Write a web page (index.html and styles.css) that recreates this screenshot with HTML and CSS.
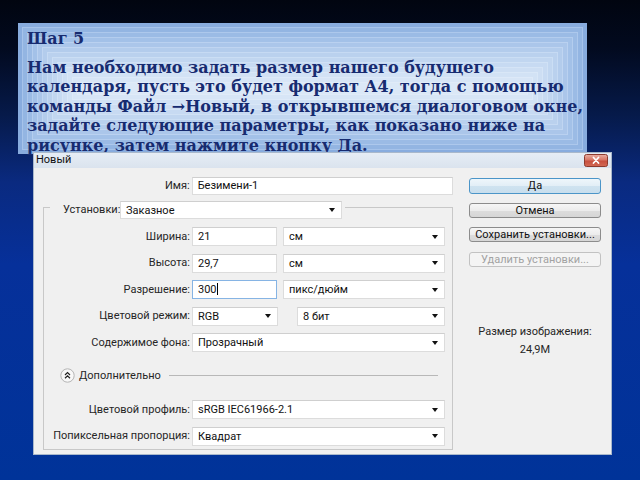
FILE: index.html
```html
<!DOCTYPE html>
<html lang="ru">
<head>
<meta charset="utf-8">
<title>Шаг 5</title>
<link rel="stylesheet" href="styles.css">
</head>
<body>
<div class="slide">
  <div class="note">
    <p class="note-title">Шаг 5</p>
    <p class="note-text">Нам необходимо задать размер нашего будущего<br>календаря, пусть это будет формат А4, тогда с помощью<br>команды Файл →Новый, в открывшемся диалоговом окне,<br>задайте следующие параметры, как показано ниже на<br>рисунке, затем нажмите кнопку Да.</p>
  </div>
  <div class="dialog">
    <div class="titlebar">
      <span class="title">Новый</span>
      <svg class="close" width="24" height="13" viewBox="0 0 24 13">
        <defs>
          <linearGradient id="cg" x1="0" y1="0" x2="0" y2="1">
            <stop offset="0" stop-color="#eab0a4"/>
            <stop offset="0.45" stop-color="#d77767"/>
            <stop offset="0.55" stop-color="#c8503f"/>
            <stop offset="1" stop-color="#d26a55"/>
          </linearGradient>
        </defs>
        <rect x="0.5" y="0.5" width="23" height="12" rx="2" fill="url(#cg)" stroke="#8c3a2e"/>
        <path d="M9.5 3.5 L14.5 9 M14.5 3.5 L9.5 9" stroke="#ffffff" stroke-width="1.8" stroke-linecap="round"/>
      </svg>
    </div>
    <div class="dlg-body">
      <div class="form">
        <div class="name-row">
          <span class="lbl lbl-name">Имя:</span>
          <div class="field w-name">Безимени-1</div>
        </div>
        <div class="group">
          <div class="group-head">
            <span class="lbl lbl-preset">Установки:</span>
            <div class="select w-preset"><span>Заказное</span><i class="arr"></i></div>
          </div>
          <div class="grow first">
            <span class="lbl glbl">Ширина:</span>
            <div class="field w-num">21</div>
            <div class="select w-unit"><span>см</span><i class="arr"></i></div>
          </div>
          <div class="grow">
            <span class="lbl glbl">Высота:</span>
            <div class="field w-num">29,7</div>
            <div class="select w-unit"><span>см</span><i class="arr"></i></div>
          </div>
          <div class="grow">
            <span class="lbl glbl">Разрешение:</span>
            <div class="field w-num focus">300<span class="caret"></span></div>
            <div class="select w-unit"><span>пикс/дюйм</span><i class="arr"></i></div>
          </div>
          <div class="grow">
            <span class="lbl glbl">Цветовой режим:</span>
            <div class="select w-mode"><span>RGB</span><i class="arr"></i></div>
            <div class="select w-bits"><span>8 бит</span><i class="arr"></i></div>
          </div>
          <div class="grow">
            <span class="lbl glbl">Содержимое фона:</span>
            <div class="select w-full"><span>Прозрачный</span><i class="arr"></i></div>
          </div>
          <div class="adv-row">
            <svg class="adv-btn" width="15" height="15" viewBox="0 0 15 15">
              <circle cx="7.5" cy="7.5" r="6.7" fill="#f8f8f8" stroke="#b4b4b4"/>
              <path d="M5 7 L7.5 4.6 L10 7 M5 10.2 L7.5 7.8 L10 10.2" fill="none" stroke="#222" stroke-width="1.2"/>
            </svg>
            <span class="adv-text">Дополнительно</span>
            <span class="adv-line"></span>
          </div>
          <div class="grow adv-first">
            <span class="lbl glbl">Цветовой профиль:</span>
            <div class="select w-full"><span>sRGB IEC61966-2.1</span><i class="arr"></i></div>
          </div>
          <div class="grow">
            <span class="lbl glbl">Попиксельная пропорция:</span>
            <div class="select w-full"><span>Квадрат</span><i class="arr"></i></div>
          </div>
        </div>
      </div>
      <div class="side">
        <div class="btn btn-default">Да</div>
        <div class="btn">Отмена</div>
        <div class="btn">Сохранить установки...</div>
        <div class="btn btn-disabled">Удалить установки...</div>
        <div class="size-label">Размер изображения:</div>
        <div class="size-value">24,9M</div>
      </div>
    </div>
  </div>
</div>
</body>
</html>
```

FILE: styles.css
```css
* { box-sizing: border-box; }

html, body {
  margin: 0;
  padding: 0;
}

body {
  width: 640px;
  height: 480px;
  overflow: hidden;
  background: linear-gradient(180deg, #010510 0%, #020a1f 10%, #061a4a 24%, #0a2a80 38%, #06309a 55%, #003399 100%);
  font-family: Roboto, "Liberation Sans", sans-serif;
}

.slide {
  padding: 23px 0 0 18px;
}

/* ---------- Text note ---------- */
.note {
  width: 569px;
  height: 131px;
  padding: 6px 9px 0;
  background: #dbe8f7;
  box-shadow:
    inset 0 0 0 4px #88acde, inset 0 0 0 5px #a6c3ea,
    inset 0 0 0 9px #93b5e2, inset 0 0 0 10px #adc8ec,
    inset 0 0 0 14px #9bbbe5, inset 0 0 0 15px #b4cdee,
    inset 0 0 0 19px #a3c1e8, inset 0 0 0 20px #bad1f0,
    inset 0 0 0 24px #abc6ea, inset 0 0 0 25px #c0d5f1,
    inset 0 0 0 29px #b3ccec, inset 0 0 0 30px #c6daf3,
    inset 0 0 0 34px #bad1ee, inset 0 0 0 35px #cbdef4,
    inset 0 0 0 39px #c1d6f0, inset 0 0 0 40px #d0e1f5,
    inset 0 0 0 44px #c7daf2, inset 0 0 0 45px #d5e4f6,
    inset 0 0 0 49px #cddef3, inset 0 0 0 50px #d9e7f7,
    inset 0 0 0 54px #d2e2f5, inset 0 0 0 55px #dde9f8,
    inset 0 0 0 59px #d7e5f6, inset 0 0 0 60px #e0ebf8;
  color: #172b70;
  font-family: "DejaVu Serif", "Liberation Serif", serif;
  font-weight: bold;
}

.note-title {
  margin: 0;
  font-size: 16px;
  line-height: 19.5px;
}

.note-text {
  margin: 9px 0 0;
  font-size: 16px;
  line-height: 19.5px;
  white-space: nowrap;
}

/* ---------- Dialog ---------- */
.dialog {
  position: relative;
  margin: -2px 0 0 15px;
  width: 579px;
  height: 303px;
  border: 1px solid #a9b8cb;
  background: #f0f0f0;
  display: flex;
  flex-direction: column;
  color: #1e1e1e;
  font-size: 11px;
}

.titlebar {
  height: 15px;
  display: flex;
  justify-content: space-between;
  align-items: flex-start;
  padding: 0 3px 0 2px;
  background: linear-gradient(180deg, #e6edf5 0%, #dae3ee 100%);
}

.title {
  line-height: 14px;
  color: #111;
}

.close {
  margin-top: 1px;
  display: block;
}

.dlg-body {
  flex: 1;
  display: flex;
  gap: 16px;
  padding: 9px 10px 4px 9px;
}

.form {
  width: 410px;
  display: flex;
  flex-direction: column;
}

.lbl {
  color: #262626;
  line-height: 18px;
  white-space: nowrap;
}

.name-row {
  display: flex;
  align-items: center;
  height: 18px;
}

.lbl-name {
  width: 147px;
  text-align: right;
  margin-right: 2px;
}

.field,
.select {
  height: 19px;
  background: #ffffff;
  border: 1px solid #dcdcdc;
  border-top-color: #cfcfcf;
  line-height: 17px;
  padding: 0 5px;
  color: #111;
  white-space: nowrap;
}

.name-row .field { height: 18px; line-height: 16px; }

.select {
  display: flex;
  justify-content: space-between;
  align-items: center;
}

.field.focus {
  border-color: #86b4e4;
}

.caret {
  display: inline-block;
  width: 1px;
  height: 12px;
  background: #000;
  vertical-align: -2px;
}

.arr {
  width: 0;
  height: 0;
  border-left: 3px solid transparent;
  border-right: 3px solid transparent;
  border-top: 4px solid #111;
  margin-right: 1px;
}

.w-name { width: 262px; }
.w-preset { width: 222px; height: 18px; }
.w-num { width: 85px; }
.w-unit { width: 162px; margin-left: 6px; }
.w-mode { width: 86px; }
.w-bits { width: 148px; margin-left: 19px; }
.w-full { width: 253px; }

/* group box */
.group {
  flex: 1;
  margin-top: 12px;
  border: 1px solid #c8c8c8;
  padding-bottom: 3px;
  display: flex;
  flex-direction: column;
}

.group-head {
  align-self: flex-start;
  display: flex;
  align-items: center;
  margin: -7px 0 0 6px;
  padding-right: 3px;
  background: #f0f0f0;
  height: 18px;
}

.lbl-preset {
  width: 70px;
  padding-left: 13px;
}

.grow {
  display: flex;
  align-items: center;
  height: 19px;
  margin-top: 7.5px;
}

.grow.first { margin-top: 8px; }
.grow.adv-first { margin-top: 17px; }

.glbl {
  width: 146px;
  text-align: right;
  margin-right: 2px;
}

.adv-row {
  display: flex;
  align-items: center;
  height: 15px;
  margin-top: 16px;
  padding-left: 16px;
  padding-right: 14px;
}

.adv-btn { display: block; }

.adv-text {
  margin-left: 4px;
  color: #262626;
}

.adv-line {
  flex: 1;
  height: 1px;
  background: #b8b8b8;
  margin-left: 8px;
}

/* ---------- right column ---------- */
.side {
  width: 132px;
  display: flex;
  flex-direction: column;
  padding-top: 1px;
}

.btn {
  height: 15px;
  margin-top: 9px;
  border: 1px solid #8c8c8c;
  border-radius: 3px;
  background: linear-gradient(180deg, #f6f6f6 0%, #ececec 50%, #dddddd 51%, #d6d6d6 100%);
  text-align: center;
  line-height: 13px;
  color: #111;
  white-space: nowrap;
}

.btn-default {
  height: 16px;
  margin-top: 0;
  border-color: #4b95c8;
  background: linear-gradient(180deg, #eef6fb 0%, #e2eef6 50%, #cfe3f0 51%, #c8deed 100%);
  line-height: 14px;
}

.btn-disabled {
  margin-top: 10px;
  border-color: #c2c2c2;
  background: #f4f4f4;
  color: #a2a2a2;
}

.size-label {
  margin-top: 59px;
  text-align: center;
  line-height: 12px;
  color: #262626;
}

.size-value {
  margin-top: 6px;
  text-align: center;
  line-height: 12px;
  color: #262626;
}
```
